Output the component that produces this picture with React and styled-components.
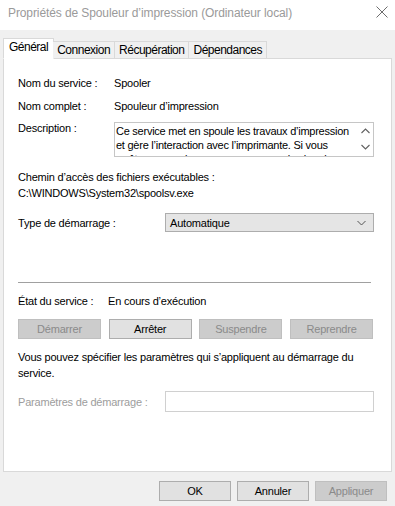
import React from 'react';
import styled, { createGlobalStyle } from 'styled-components';

const GlobalStyle = createGlobalStyle`
  html, body {
    margin: 0;
    padding: 0;
    background: #f0f0f0;
  }
  body {
    font-family: 'Liberation Sans', Arial, sans-serif;
    font-size: 11px;
    letter-spacing: -0.2px;
    color: #000;
  }
`;

const tabs = ['Général', 'Connexion', 'Récupération', 'Dépendances'];

function CloseIcon() {
  return (
    <svg width="12" height="12" viewBox="0 0 12 12">
      <path d="M0.5 0.5 L11.5 11.5 M11.5 0.5 L0.5 11.5" stroke="#6d6d6d" strokeWidth="1" fill="none" />
    </svg>
  );
}

function Chevron({ up }) {
  return (
    <svg width="9" height="6" viewBox="0 0 9 6">
      <path
        d={up ? 'M0.5 5 L4.5 1 L8.5 5' : 'M0.5 1 L4.5 5 L8.5 1'}
        stroke="#606060"
        strokeWidth="1.1"
        fill="none"
      />
    </svg>
  );
}

function App() {
  return (
    <Window>
      <GlobalStyle />
      <TitleBar>
        <Title>Propriétés de Spouleur d’impression (Ordinateur local)</Title>
        <CloseButton>
          <CloseIcon />
        </CloseButton>
      </TitleBar>

      <TabStrip>
        {tabs.map((t, i) => (
          <Tab key={t} active={i === 0}>
            {t}
          </Tab>
        ))}
      </TabStrip>

      <Panel>
        <InfoRow>
          <Label>Nom du service :</Label>
          <span>Spooler</span>
        </InfoRow>
        <InfoRow>
          <Label>Nom complet :</Label>
          <span>Spouleur d’impression</span>
        </InfoRow>
        <DescRow>
          <Label>Description :</Label>
          <DescBox>
            <DescText>
              Ce service met en spoule les travaux d’impression et gère l’interaction avec
              l’imprimante. Si vous arrêtez ce service, vous ne pourrez plus imprimer ni
              afficher vos imprimantes.
            </DescText>
            <ScrollArrows>
              <Chevron up />
              <Chevron />
            </ScrollArrows>
          </DescBox>
        </DescRow>

        <PathBlock>
          <div>Chemin d’accès des fichiers exécutables :</div>
          <div>C:\WINDOWS\System32\spoolsv.exe</div>
        </PathBlock>

        <StartupRow>
          <Label>Type de démarrage :</Label>
          <Combo>
            <span>Automatique</span>
            <svg width="9" height="6" viewBox="0 0 9 6">
              <path d="M0.5 1 L4.5 5 L8.5 1" stroke="#555" strokeWidth="1" fill="none" />
            </svg>
          </Combo>
        </StartupRow>

        <Separator />

        <StateRow>
          <Label narrow>État du service :</Label>
          <span>En cours d’exécution</span>
        </StateRow>

        <ButtonRow>
          <Button disabled>Démarrer</Button>
          <Button>Arrêter</Button>
          <Button disabled>Suspendre</Button>
          <Button disabled>Reprendre</Button>
        </ButtonRow>

        <Note>
          Vous pouvez spécifier les paramètres qui s’appliquent au démarrage du service.
        </Note>

        <ParamRow>
          <Label muted>Paramètres de démarrage :</Label>
          <ParamInput />
        </ParamRow>
      </Panel>

      <Footer>
        <Button wide>OK</Button>
        <Button wide>Annuler</Button>
        <Button wide disabled>
          Appliquer
        </Button>
      </Footer>
    </Window>
  );
}

const Window = styled.div`
  width: 395px;
  height: 506px;
  background: #f0f0f0;
  display: flex;
  flex-direction: column;
  overflow: hidden;
`;

const TitleBar = styled.div`
  height: 30px;
  background: #fff;
  display: flex;
  align-items: center;
  justify-content: space-between;
  padding: 0 7px 0 8px;
  box-sizing: border-box;
`;

const Title = styled.div`
  font-size: 12px;
  letter-spacing: -0.1px;
  color: #9a9a9a;
  margin-top: -4px;
`;

const CloseButton = styled.div`
  display: flex;
  margin-top: -6px;
`;

const TabStrip = styled.div`
  display: flex;
  align-items: flex-end;
  margin: 7px 0 0 5px;
  height: 21px;
  position: relative;
  z-index: 1;
`;

const Tab = styled.div`
  box-sizing: border-box;
  height: ${(p) => (p.active ? '21px' : '17px')};
  padding: ${(p) => (p.active ? '0 5px' : '0 4px')};
  margin-left: ${(p) => (p.active ? '-2px' : '0')};
  margin-right: ${(p) => (p.active ? '-1px' : '0')};
  display: flex;
  align-items: center;
  padding-bottom: ${(p) => (p.active ? '3px' : '0')};
  background: ${(p) => (p.active ? '#fff' : '#f0f0f0')};
  border: 1px solid #d9d9d9;
  border-bottom: ${(p) => (p.active ? '1px solid #fff' : 'none')};
  border-left: ${(p) => (p.active ? '1px solid #d9d9d9' : 'none')};
  margin-bottom: ${(p) => (p.active ? '-1px' : '0')};
  font-size: 12px;
  letter-spacing: -0.5px;
`;

const Panel = styled.div`
  margin: 0 3px;
  height: 414px;
  box-sizing: border-box;
  background: #fff;
  border: 1px solid #d9d9d9;
  padding: 16px 17px 0 14px;
  display: flex;
  flex-direction: column;
`;

const Label = styled.span`
  display: inline-block;
  width: ${(p) => (p.narrow ? '90px' : '96px')};
  flex-shrink: 0;
  color: ${(p) => (p.muted ? '#9d9d9d' : '#000')};
`;

const InfoRow = styled.div`
  display: flex;
  align-items: center;
  height: 16px;
  margin-bottom: 7px;
`;

const DescRow = styled.div`
  display: flex;
  align-items: flex-start;
  margin-top: 1px;
`;

const DescBox = styled.div`
  width: 262px;
  height: 35px;
  box-sizing: border-box;
  border: 1px solid #c6c6c6;
  display: flex;
  overflow: hidden;
`;

const DescText = styled.div`
  flex: 1;
  height: 33px;
  padding: 0 6px 0 1px;
  line-height: 14px;
  margin-top: 1px;
  letter-spacing: -0.25px;
  overflow: hidden;
`;

const ScrollArrows = styled.div`
  width: 16px;
  flex-shrink: 0;
  display: flex;
  flex-direction: column;
  align-items: center;
  justify-content: space-between;
  padding: 5px 0 6px;
  box-sizing: border-box;
`;

const PathBlock = styled.div`
  margin-top: 12px;
  line-height: 16px;
`;

const StartupRow = styled.div`
  display: flex;
  align-items: center;
  margin-top: 12px;
  & > ${Label} {
    width: 147px;
  }
`;

const Combo = styled.div`
  width: 209px;
  height: 19px;
  box-sizing: border-box;
  background: #e5e5e5;
  border: 1px solid #adadad;
  display: flex;
  align-items: center;
  justify-content: space-between;
  padding: 0 7px 0 4px;
`;

const Separator = styled.div`
  height: 1px;
  background: #a0a0a0;
  margin: 50px 3px 0 0;
`;

const StateRow = styled.div`
  display: flex;
  align-items: center;
  margin-top: 10px;
  height: 16px;
`;

const ButtonRow = styled.div`
  display: flex;
  gap: 7.7px;
  margin-top: 10px;
`;

const Button = styled.button`
  font-family: inherit;
  font-size: 11px;
  letter-spacing: -0.2px;
  width: ${(p) => (p.wide ? '72px' : '83px')};
  height: 20px;
  box-sizing: border-box;
  padding: 0;
  background: ${(p) => (p.disabled ? '#cccccc' : '#e1e1e1')};
  border: 1px solid ${(p) => (p.disabled ? '#bfbfbf' : '#adadad')};
  color: ${(p) => (p.disabled ? '#8a8a8a' : '#000')};
  border-radius: 0;
`;

const Note = styled.div`
  margin-top: 10px;
  line-height: 16px;
`;

const ParamRow = styled.div`
  display: flex;
  align-items: center;
  margin-top: 10px;
  & > ${Label} {
    width: 147px;
  }
`;

const ParamInput = styled.div`
  width: 209px;
  height: 21px;
  box-sizing: border-box;
  border: 1px solid #d0d0d0;
  background: #fff;
`;

const Footer = styled.div`
  display: flex;
  justify-content: flex-end;
  gap: 6px;
  padding: 9px 8px 0 0;
`;

export default App;
